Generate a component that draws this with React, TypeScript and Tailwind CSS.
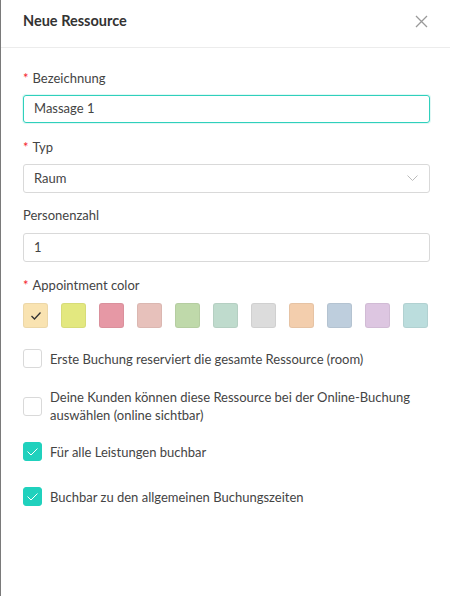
import React from "react";

const colors = ["#f9e3b1", "#e3e87f", "#e698a5", "#e7c1bb", "#bfd9aa", "#bfdbcd", "#dcdcdc", "#f3cead", "#becedd", "#ddc6e1", "#bbdddd"];

function Check({ checked }: { checked: boolean }) {
  return (
    <div
      className={
        "w-[19px] h-[19px] shrink-0 rounded-[3px] border flex items-center justify-center " +
        (checked ? "bg-[#20d1bd] border-[#20d1bd]" : "bg-white border-[#d9d9d9]")
      }
    >
      {checked && (
        <svg width="13" height="10" viewBox="0 0 13 10" fill="none">
          <path d="M1.5 4.5 L5 8 L11.5 1.5" stroke="white" strokeWidth="1" />
        </svg>
      )}
    </div>
  );
}

function Label({ text, req }: { text: string; req?: boolean }) {
  return (
    <div className="text-[13px] text-[#444] leading-[18px] flex">
      {req && <span className="text-[#f5222d] mr-[4px]">*</span>}
      {text}
    </div>
  );
}

export default function App() {
  return (
    <div
      className="w-[450px] h-[596px] bg-white border-l border-[#7a7a7a] flex flex-col"
      style={{ fontFamily: 'Lato, "Noto Sans", sans-serif' }}
    >
      <div className="h-[48px] border-b border-[#ececec] flex items-center justify-between pl-[22px] pr-[22px] pb-[5px]">
        <div className="text-[14.5px] font-bold text-[#333]">Neue Ressource</div>
        <svg width="13" height="13" viewBox="0 0 13 13">
          <path d="M1 1 L12 12 M12 1 L1 12" stroke="#999" strokeWidth="1.3" />
        </svg>
      </div>
      <div className="pl-[22px] pr-[20px] pt-[21px] flex flex-col">
        <Label text="Bezeichnung" req />
        <div className="mt-[8px] h-[28px] rounded-[3px] border border-[#2fd0bc] flex items-center px-[10px] text-[13px] text-[#444] shadow-[0_0_0_1px_rgba(47,208,188,0.15)]">
          Massage 1
        </div>
        <div className="mt-[15px]">
          <Label text="Typ" req />
        </div>
        <div className="mt-[8px] h-[29px] rounded-[3px] border border-[#d9d9d9] flex items-center justify-between px-[10px] text-[13px] text-[#444]">
          <span>Raum</span>
          <svg width="11" height="7" viewBox="0 0 11 7" className="mr-[1px]">
            <path d="M0.5 0.5 L5.5 5.5 L10.5 0.5" stroke="#bbb" strokeWidth="1" fill="none" />
          </svg>
        </div>
        <div className="mt-[13px]">
          <Label text="Personenzahl" />
        </div>
        <div className="mt-[9px] h-[29px] rounded-[3px] border border-[#d9d9d9] flex items-center px-[10px] text-[13px] text-[#444]">
          1
        </div>
        <div className="mt-[14px]">
          <Label text="Appointment color" req />
        </div>
        <div className="mt-[9px] flex gap-[13px]">
          {colors.map((c, i) => (
            <div
              key={i}
              className="w-[25px] h-[25px] rounded-[3px] border border-black/5 flex items-center justify-center"
              style={{ backgroundColor: c }}
            >
              {i === 0 && (
                <svg width="12" height="10" viewBox="0 0 12 10" fill="none">
                  <path d="M1.5 5 L4.5 8 L10.5 1.5" stroke="#333" strokeWidth="1.3" />
                </svg>
              )}
            </div>
          ))}
        </div>
        <div className="mt-[21px] flex items-center gap-[8px] text-[13px] text-[#444] leading-[18px] whitespace-nowrap">
          <Check checked={false} />
          <span>Erste Buchung reserviert die gesamte Ressource (room)</span>
        </div>
        <div className="mt-[20px] flex items-center gap-[8px] text-[13px] text-[#444] leading-[18px] whitespace-nowrap">
          <Check checked={false} />
          <span>
            Deine Kunden können diese Ressource bei der Online-Buchung
            <br />
            auswählen (online sichtbar)
          </span>
        </div>
        <div className="mt-[18px] flex items-center gap-[8px] text-[13px] text-[#444] leading-[18px] whitespace-nowrap">
          <Check checked />
          <span>Für alle Leistungen buchbar</span>
        </div>
        <div className="mt-[26px] flex items-center gap-[8px] text-[13px] text-[#444] leading-[18px] whitespace-nowrap">
          <Check checked />
          <span>Buchbar zu den allgemeinen Buchungszeiten</span>
        </div>
      </div>
    </div>
  );
}
